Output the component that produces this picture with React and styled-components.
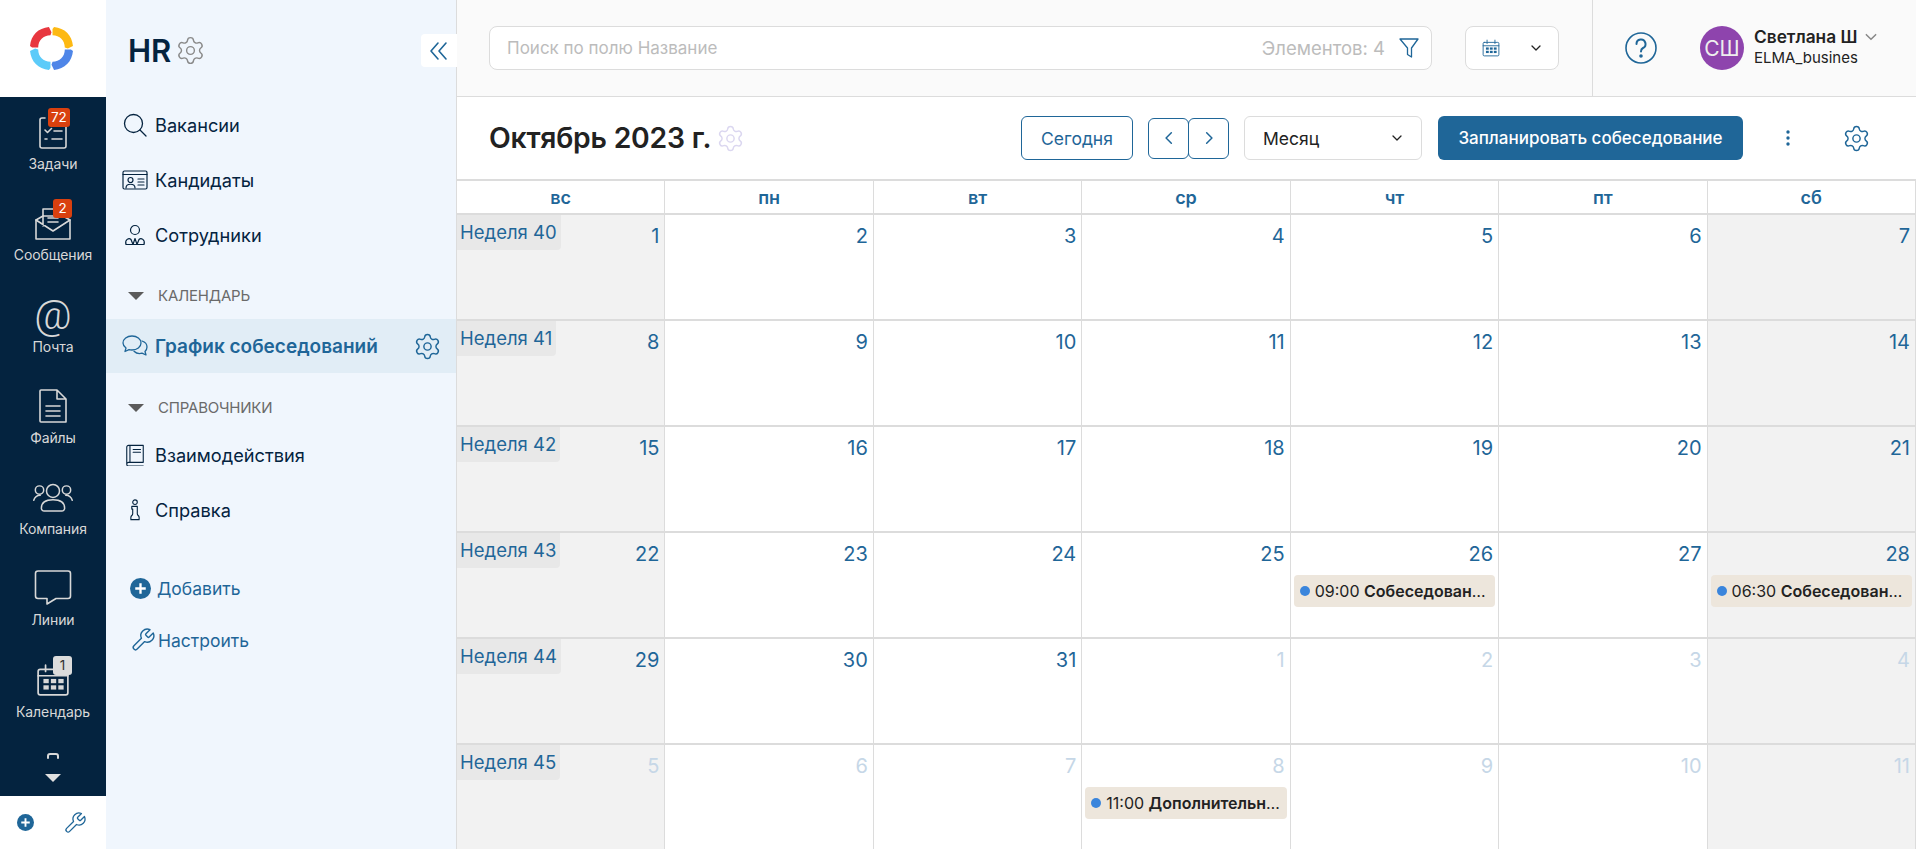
import React from 'react';
import styled, { createGlobalStyle } from 'styled-components';
import { Settings } from 'lucide-react';

const blue = '#1f6698';
const navy = '#04233f';

const GlobalStyle = createGlobalStyle`
  html, body {
    margin: 0;
    height: 100%;
    overflow: hidden;
    background: #fff;
    font-family: Inter, "Noto Sans", sans-serif;
  }
  * { box-sizing: border-box; }
`;

const Page = styled.div`
  display: flex;
  width: 1916px;
  height: 849px;
  overflow: hidden;
`;

const Rail = styled.aside`
  width: 106px;
  flex: none;
  display: flex;
  flex-direction: column;
`;

const LogoBox = styled.div`
  height: 97px;
  display: flex;
  align-items: center;
  justify-content: center;
  padding-right: 4px;
  background: #fff;
`;

const RailNav = styled.nav`
  flex: 1;
  background: ${navy};
  padding-top: 3px;
  display: flex;
  flex-direction: column;
`;

const RailItem = styled.div`
  height: 91.3px;
  display: flex;
  flex-direction: column;
  align-items: center;
  justify-content: flex-start;
  padding-top: 12px;
  gap: 3px;
  color: #d8d8d8;
  font-size: 14px;
  letter-spacing: -0.1px;
`;

const RailIcon = styled.div`
  position: relative;
  width: 40px;
  height: 40px;
  display: flex;
  align-items: center;
  justify-content: center;
`;

const AtGlyph = styled.span`
  color: #d8d8d8;
  font-family: Roboto, sans-serif;
  font-size: 41px;
  font-weight: 300;
  line-height: 36px;
`;

const Count = styled.span`
  position: absolute;
  top: ${p => p.$top}px;
  left: ${p => p.$left}px;
  min-width: 19px;
  height: 19px;
  padding: 0 3px;
  border-radius: 3px;
  background: ${p => (p.$muted ? '#dcdcdc' : '#d9400f')};
  color: ${p => (p.$muted ? '#333' : '#fff')};
  font-size: 13.500px;
  line-height: 19px;
  text-align: center;
`;

const MoreBox = styled.div`
  display: flex;
  flex-direction: column;
  align-items: center;
  gap: 5px;
  padding-top: 10px;
`;

const RailFoot = styled.div`
  height: 53px;
  display: flex;
  align-items: center;
  justify-content: center;
  gap: 29px;
  padding-right: 2px;
  background: #fff;
`;

const Side = styled.aside`
  position: relative;
  width: 351px;
  flex: none;
  background: #f0f6fd;
  border-right: 1px solid #dcdcdc;
`;

const SideHead = styled.div`
  height: 97px;
  display: flex;
  align-items: center;
  gap: 4px;
  padding: 4px 0 0 22px;
  color: ${navy};
  font-size: 31px;
  font-weight: 600;
`;

const Collapse = styled.div`
  position: absolute;
  top: 34px;
  right: -1px;
  width: 36px;
  height: 33px;
  background: #fff;
  border-radius: 4px 0 0 4px;
  display: flex;
  align-items: center;
  justify-content: center;
`;

const MenuList = styled.div`
  display: flex;
  flex-direction: column;
`;

const MenuItem = styled.div`
  height: ${p => (p.$active ? 54 : 55)}px;
  display: flex;
  align-items: center;
  gap: 7px;
  padding: 0 14px 0 15px;
  background: ${p => (p.$active ? '#e1edf6' : 'transparent')};
  color: ${p => (p.$active ? blue : navy)};
  font-size: ${p => (p.$active ? 19 : 18.2)}px;
  font-weight: ${p => (p.$active ? 600 : 400)};
`;

const MenuIcon = styled.span`
  width: 27px;
  flex: none;
  display: flex;
  align-items: center;
  justify-content: center;
`;

const MenuLabel = styled.span`
  flex: 1;
`;

const Section = styled.div`
  height: ${p => p.$h}px;
  padding-top: ${p => p.$pt}px;
  display: flex;
  align-items: flex-start;
  gap: 14px;
  padding-left: 22px;
  color: #6a6a6a;
  font-size: 15px;
  letter-spacing: -0.2px;
`;

const Caret = styled.span`
  margin-top: 6px;
  width: 0;
  height: 0;
  border-left: 8px solid transparent;
  border-right: 8px solid transparent;
  border-top: 8px solid ${p => p.$color || '#5b5b5b'};
`;

const SideActions = styled.div`
  padding: 40px 0 0 24px;
  display: flex;
  flex-direction: column;
  gap: 30px;
`;

const SideAction = styled.div`
  display: flex;
  align-items: center;
  gap: ${p => p.$gap}px;
  height: 22px;
  color: ${blue};
  font-size: 17.500px;
`;

const Main = styled.main`
  flex: 1;
  min-width: 0;
  display: flex;
  flex-direction: column;
`;

const TopBar = styled.header`
  height: 97px;
  flex: none;
  display: flex;
  align-items: stretch;
  background: #fafafa;
  border-bottom: 1px solid #dcdcdc;
`;

const TopLeft = styled.div`
  flex: none;
  width: 1136px;
  padding: 0 33px 0 32px;
  display: flex;
  align-items: center;
  gap: 33px;
  border-right: 1px solid #dcdcdc;
`;

const Search = styled.div`
  flex: 1;
  height: 44px;
  margin-top: -1px;
  padding: 0 11px 0 17px;
  display: flex;
  align-items: center;
  justify-content: space-between;
  background: #fff;
  border: 1px solid #dcdcdc;
  border-radius: 8px;
  color: #bcbcbc;
  font-size: 17px;
`;

const SearchRight = styled.div`
  display: flex;
  align-items: center;
  gap: 13px;
  font-size: 18.500px;
`;

const DateButton = styled.div`
  width: 94px;
  height: 44px;
  margin-top: -1px;
  padding: 0 16px;
  display: flex;
  align-items: center;
  justify-content: space-between;
  background: #fff;
  border: 1px solid #dcdcdc;
  border-radius: 8px;
`;

const TopRight = styled.div`
  flex: 1;
  display: flex;
  align-items: center;
  padding-left: 32px;
`;

const Avatar = styled.div`
  width: 44px;
  height: 44px;
  margin-left: 43px;
  border-radius: 50%;
  background: #8e44ad;
  color: #eee;
  font-size: 21px;
  display: flex;
  align-items: center;
  justify-content: center;
`;

const UserBox = styled.div`
  margin-left: 10px;
  color: #222;
`;

const UserName = styled.div`
  display: flex;
  align-items: center;
  gap: 7px;
  font-size: 17.300px;
  font-weight: 600;
  line-height: 20px;
`;

const UserOrg = styled.div`
  font-size: 15px;
  line-height: 22px;
`;

const Toolbar = styled.div`
  height: 82px;
  flex: none;
  display: flex;
  align-items: center;
  padding: 0 45px 0 32px;
`;

const Title = styled.h1`
  margin: 0 5px 0 0;
  color: #222;
  font-size: 28.300px;
  font-weight: 600;
  letter-spacing: -0.2px;
`;

const Spacer = styled.div`
  flex: 1;
`;

const OutlineButton = styled.div`
  width: 112px;
  height: 44px;
  margin-right: 15px;
  display: flex;
  align-items: center;
  justify-content: center;
  border: 1px solid ${blue};
  border-radius: 6px;
  color: ${blue};
  font-size: 17.500px;
`;

const ArrowButton = styled.div`
  width: 41px;
  height: 41px;
  margin-left: ${p => (p.$joined ? -1 : 0)}px;
  display: flex;
  align-items: center;
  justify-content: center;
  border: 1px solid ${blue};
  border-radius: 6px;
`;

const Select = styled.div`
  width: 178px;
  height: 44px;
  margin: 0 16px 0 15px;
  padding: 0 18px;
  display: flex;
  align-items: center;
  justify-content: space-between;
  border: 1px solid #dcdcdc;
  border-radius: 6px;
  color: #222;
  font-size: 17.500px;
`;

const PrimaryButton = styled.div`
  width: 305px;
  height: 44px;
  display: flex;
  align-items: center;
  justify-content: center;
  background: ${blue};
  border-radius: 6px;
  color: #fff;
  font-size: 17px;
  font-weight: 500;
`;

const ToolIcons = styled.div`
  display: flex;
  align-items: center;
  gap: 52px;
  margin-left: 43px;
`;

const Grid = styled.div`
  flex: 1;
  min-height: 0;
  display: grid;
  grid-template-columns: repeat(7, 1fr);
  grid-template-rows: 34px repeat(6, 106px);
  border-top: 2px solid #dcdcdc;
`;

const DayHead = styled.div`
  display: flex;
  align-items: center;
  justify-content: center;
  border-right: 1px solid #dcdcdc;
  border-bottom: 2px solid #dcdcdc;
  color: ${blue};
  font-size: 18px;
  font-weight: 600;
`;

const Cell = styled.div`
  position: relative;
  min-width: 0;
  padding: 10px 3px 0;
  border-right: 1px solid #dcdcdc;
  border-bottom: 2px solid #dcdcdc;
  background: ${p => (p.$weekend ? '#f2f2f2' : '#fff')};
`;

const DayNumber = styled.div`
  padding-right: 2px;
  text-align: right;
  color: ${p => (p.$muted ? '#c6d7e7' : blue)};
  font-size: 20px;
  line-height: 22px;
`;

const WeekBadge = styled.div`
  position: absolute;
  top: 0;
  left: 0;
  height: 35px;
  padding: 5px 4px 0 3px;
  background: #e8e8e8;
  border-radius: 0 0 4px 0;
  color: ${blue};
  font-size: 18.500px;
  line-height: 24px;
`;

const EventChip = styled.div`
  height: 32px;
  margin-top: 10px;
  padding: 0 6px;
  display: flex;
  align-items: center;
  gap: 5px;
  background: #ede6dc;
  border-radius: 4px;
  color: #222;
  font-size: 16px;
`;

const EventDot = styled.span`
  width: 10px;
  height: 10px;
  flex: none;
  border-radius: 50%;
  background: #3a85dc;
`;

const EventText = styled.span`
  min-width: 0;
  overflow: hidden;
  white-space: nowrap;
  text-overflow: ellipsis;

  b {
    font-weight: 600;
  }
`;

// one ring segment, rotated for each of the four colours
const logoSegment = 'M1 19.500 C2 9 9 2 19.500 1 L22 6 L21 9 C14 9 9 14 9 21 L3 21 z';

const Logo = () => (
  <svg width="45" height="45" viewBox="0 0 44 44">
    <path d={logoSegment} fill="#e8373f" />
    <path d={logoSegment} fill="#fdb913" transform="rotate(90 22 22)" />
    <path d={logoSegment} fill="#4f86e8" transform="rotate(180 22 22)" />
    <path d={logoSegment} fill="#5ccbf9" transform="rotate(270 22 22)" />
  </svg>
);

const Line = ({ size = 24, color = '#d8d8d8', width = 1.6, children, viewBox }) => (
  <svg
    width={size}
    height={size}
    viewBox={viewBox || `0 0 ${size} ${size}`}
    fill="none"
    stroke={color}
    strokeWidth={width}
    strokeLinecap="round"
    strokeLinejoin="round"
  >
    {children}
  </svg>
);

const Gear = ({ size = 24, color = blue, width = 1.3 }) => (
  <Settings size={size} color={color} strokeWidth={width} />
);

const Wrench = ({ size = 24 }) => (
  <Line size={size} color={blue} width={1.3} viewBox="0 0 24 24">
    <path d="M14.700 6.300 a1 1 0 0 0 0 1.400 l1.600 1.600 a1 1 0 0 0 1.400 0 l3.770-3.770 a6 6 0 0 1-7.940 7.940 l-6.910 6.910 a2.120 2.120 0 0 1-3-3 l6.910-6.910 a6 6 0 0 1 7.940-7.940 l-3.760 3.760 z" />
  </Line>
);

const PlusCircle = ({ size = 18 }) => (
  <svg width={size} height={size} viewBox="0 0 18 18">
    <circle cx="9" cy="9" r="9" fill={blue} />
    <path d="M9 4.500 v9 M4.500 9 h9" stroke="#fff" strokeWidth="2" />
  </svg>
);

const Chevron = ({ dir = 'down', color = '#222', size = 12 }) => {
  const d = {
    down: 'M2 4 L6 8 L10 4',
    left: 'M8 1.500 L3.500 6 L8 10.500',
    right: 'M4 1.500 L8.500 6 L4 10.500',
  }[dir];
  return (
    <Line size={size} color={color} width={1.3} viewBox="0 0 12 12">
      <path d={d} />
    </Line>
  );
};

const CalendarGlyph = ({ size, color, width }) => (
  <Line size={size} color={color} width={width} viewBox="0 0 32 32">
    <rect x="2" y="6" width="28" height="24" rx="2" />
    <path d="M2 12 H30 M9 2 V8 M23 2 V8" />
    <g fill={color} stroke="none">
      <rect x="7" y="15" width="5" height="4" />
      <rect x="14" y="15" width="5" height="4" />
      <rect x="21" y="15" width="5" height="4" />
      <rect x="7" y="21" width="5" height="4" />
      <rect x="14" y="21" width="5" height="4" />
      <rect x="21" y="21" width="5" height="4" />
    </g>
  </Line>
);

const railItems = [
  {
    label: 'Задачи',
    count: '72',
    top: -4,
    left: 15,
    icon: (
      <Line size={34} viewBox="0 0 34 34">
        <path d="M9 3 H6 a2 2 0 0 0-2 2 V31 a2 2 0 0 0 2 2 H28 a2 2 0 0 0 2-2 V5 a2 2 0 0 0-2-2 H25" />
        <path d="M9 15 l2.500 2.500 4-4 M18 16 H26 M9 24 H11 M16 24 H26" />
      </Line>
    ),
  },
  {
    label: 'Сообщения',
    count: '2',
    top: -4,
    left: 20,
    icon: (
      <Line size={38} viewBox="0 0 38 38">
        <path d="M9 12 L2 16 V35 H36 V16 L29 12" />
        <path d="M2 16 L19 27 L36 16 M9 22 V5 H24 M9 12 H29 M14 14 H24 M14 18 H24" />
      </Line>
    ),
  },
  {
    label: 'Почта',
    icon: <AtGlyph>@</AtGlyph>,
  },
  {
    label: 'Файлы',
    icon: (
      <Line size={36} viewBox="0 0 36 36">
        <path d="M6 2 H22 L31 11 V34 H6 a1 1 0 0 1-1-1 V3 a1 1 0 0 1 1-1 z M22 2 V11 H31" />
        <path d="M11 18 H25 M11 23 H25 M11 28 H25" />
      </Line>
    ),
  },
  {
    label: 'Компания',
    icon: (
      <Line size={43} viewBox="0 0 43 30">
        <circle cx="21.500" cy="8" r="7" />
        <circle cx="7" cy="7" r="4.500" />
        <circle cx="36" cy="7" r="4.500" />
        <path d="M12 29.500 a3 3 0 0 1-3-3 c0-6 5-9 12.500-9 s12.500 3 12.500 9 a3 3 0 0 1-3 3 z M.8 18 c1-3.500 4-5.500 7-5.500 M42.200 18 c-1-3.500-4-5.500-7-5.500" />
      </Line>
    ),
  },
  {
    label: 'Линии',
    icon: (
      <Line size={38} viewBox="0 0 38 38">
        <path d="M4 2 H34 a2.500 2.500 0 0 1 2.500 2.500 V27 a2.500 2.500 0 0 1-2.500 2.500 H22 L13 35 V29.500 H4 A2.500 2.500 0 0 1 1.500 27 V4.500 A2.500 2.500 0 0 1 4 2 z" />
      </Line>
    ),
  },
  {
    label: 'Календарь',
    count: '1',
    top: -4,
    left: 20,
    muted: true,
    icon: <CalendarGlyph size={34} color="#d8d8d8" width={1.6} />,
  },
];

const menuIcons = {
  search: (
    <Line size={24} color={navy} width={1.3} viewBox="0 0 24 24">
      <circle cx="10.500" cy="10.500" r="9" />
      <path d="M17 17 L23 23" />
    </Line>
  ),
  card: (
    <Line size={26} color={navy} width={1.2} viewBox="0 0 26 20">
      <rect x="1" y="1" width="24" height="18" rx="1.500" />
      <path d="M1 4.500 H25" />
      <circle cx="8.500" cy="10" r="2.500" />
      <path d="M4 18 c0-5 9-5 9 0 M16 9 H22 M16 12 H22 M16 15 H22" />
    </Line>
  ),
  people: (
    <Line size={22} color={navy} width={1.2} viewBox="0 0 22 22">
      <circle cx="11" cy="6" r="4.500" />
      <path d="M2 20.500 c-1.500-5 3-7 5-5 l2 5 z M13 20.500 l2-5 c2-2 6.500 0 5 5 z M9 20.500 h4 l-2-6 z" />
    </Line>
  ),
  chat: (
    <Line size={26} color={blue} width={1.3} viewBox="0 0 26 24">
      <path d="M10 2 c5 0 9 3 9 7 s-4 7-9 7 c-1 0-2 0-3-.3 L3 17.500 l1-3.500 C2 12.500 1 11 1 9 c0-4 4-7 9-7 z" />
      <path d="M20 7 c3 1 5 3.500 5 6 0 2-1 3.500-2 4.500 l1 3.500-4-1.800 c-3 .8-6 0-8-2" />
    </Line>
  ),
  book: (
    <Line size={22} color={navy} width={1.2} viewBox="0 0 22 24">
      <path d="M4 1.500 H20 V20 H4 a2 2 0 0 0 0 4 H20 M2 22 V3.500 a2 2 0 0 1 2-2 M5.500 1.500 V20" />
      <path d="M9 6 H17 M9 9 H17" />
    </Line>
  ),
  help: (
    <Line size={22} color={navy} width={1.2} viewBox="0 0 22 24">
      <circle cx="11" cy="3.500" r="2.500" />
      <path d="M7.500 8 H13.500 V16 c0 2 2 2 2 4 V22.500 H6.500 V20 c0-2 2-2 2-4 V11 H7.500 z" />
    </Line>
  ),
};

const firstMenu = [
  { label: 'Вакансии', icon: 'search' },
  { label: 'Кандидаты', icon: 'card' },
  { label: 'Сотрудники', icon: 'people' },
];

const lastMenu = [
  { label: 'Взаимодействия', icon: 'book' },
  { label: 'Справка', icon: 'help' },
];

const weekDays = ['вс', 'пн', 'вт', 'ср', 'чт', 'пт', 'сб'];

const eventsByDay = {
  '26': { time: '09:00', title: 'Собеседование' },
  '28': { time: '06:30', title: 'Собеседование' },
  '8m': { time: '11:00', title: 'Дополнительное собеседование' },
};

// 1 Oct 2023 is a Sunday; 42 days from there fill the month view
const days = Array.from({ length: 42 }, (_, i) => {
  const date = new Date(2023, 9, 1 + i);
  const muted = date.getMonth() !== 9;
  return { n: date.getDate(), muted, key: `${date.getDate()}${muted ? 'm' : ''}` };
});

const App = () => (
  <Page>
    <GlobalStyle />
    <Rail>
      <LogoBox>
        <Logo />
      </LogoBox>
      <RailNav>
        {railItems.map(item => (
          <RailItem key={item.label}>
            <RailIcon>
              {item.icon}
              {item.count && (
                <Count $top={item.top} $left={item.left} $muted={item.muted}>
                  {item.count}
                </Count>
              )}
            </RailIcon>
            {item.label}
          </RailItem>
        ))}
        <MoreBox>
          <Line size={14} viewBox="0 0 14 8" width={2}>
            <path d="M2 6 V4 a2 2 0 0 1 2-2 H10 a2 2 0 0 1 2 2 V6" />
          </Line>
          <Caret $color="#e0e0e0" />
        </MoreBox>
      </RailNav>
      <RailFoot>
        <PlusCircle size={17} />
        <Wrench size={24} />
      </RailFoot>
    </Rail>

    <Side>
      <SideHead>
        HR
        <Gear size={31} color="#8a8a8a" width={1.1} />
      </SideHead>
      <Collapse>
        <Line size={20} color={blue} width={1.6} viewBox="0 0 20 20">
          <path d="M9 2 L2 10 L9 18 M17 2 L10 10 L17 18" />
        </Line>
      </Collapse>
      <MenuList>
        {firstMenu.map(item => (
          <MenuItem key={item.label}>
            <MenuIcon>{menuIcons[item.icon]}</MenuIcon>
            <MenuLabel>{item.label}</MenuLabel>
          </MenuItem>
        ))}
        <Section $h={57} $pt={24}>
          <Caret />
          КАЛЕНДАРЬ
        </Section>
        <MenuItem $active>
          <MenuIcon>{menuIcons.chat}</MenuIcon>
          <MenuLabel>График собеседований</MenuLabel>
          <Gear size={29} color={blue} width={1.2} />
        </MenuItem>
        <Section $h={54} $pt={25}>
          <Caret />
          СПРАВОЧНИКИ
        </Section>
        {lastMenu.map(item => (
          <MenuItem key={item.label}>
            <MenuIcon>{menuIcons[item.icon]}</MenuIcon>
            <MenuLabel>{item.label}</MenuLabel>
          </MenuItem>
        ))}
      </MenuList>
      <SideActions>
        <SideAction $gap={6}>
          <PlusCircle size={21} />
          <span>Добавить</span>
        </SideAction>
        <SideAction $gap={2}>
          <Wrench size={26} />
          <span>Настроить</span>
        </SideAction>
      </SideActions>
    </Side>

    <Main>
      <TopBar>
        <TopLeft>
          <Search>
            Поиск по полю Название
            <SearchRight>
              Элементов: 4
              <Line size={22} color={blue} width={1.3} viewBox="0 0 22 22">
                <path d="M2 2 H20 L13.500 11 V20 L9.500 17.500 V11 z" />
              </Line>
            </SearchRight>
          </Search>
          <DateButton>
            <CalendarGlyph size={18} color={blue} width={1.6} />
            <Chevron />
          </DateButton>
        </TopLeft>
        <TopRight>
          <Line size={32} color={blue} width={1.6} viewBox="0 0 32 32">
            <circle cx="16" cy="16" r="15" />
            <path d="M11.500 12 a4.500 4.500 0 1 1 6.500 4 c-1.500 .8-2 1.500-2 3.500" strokeWidth="2" />
            <circle cx="16" cy="24" r="1" fill={blue} />
          </Line>
          <Avatar>СШ</Avatar>
          <UserBox>
            <UserName>
              Светлана Ш
              <Chevron color="#888" size={14} />
            </UserName>
            <UserOrg>ELMA_busines</UserOrg>
          </UserBox>
        </TopRight>
      </TopBar>

      <Toolbar>
        <Title>Октябрь 2023 г.</Title>
        <Gear size={29} color="#dbd7f0" width={1.2} />
        <Spacer />
        <OutlineButton>Сегодня</OutlineButton>
        <ArrowButton>
          <Chevron dir="left" color={blue} size={14} />
        </ArrowButton>
        <ArrowButton $joined>
          <Chevron dir="right" color={blue} size={14} />
        </ArrowButton>
        <Select>
          Месяц
          <Chevron />
        </Select>
        <PrimaryButton>Запланировать собеседование</PrimaryButton>
        <ToolIcons>
          <svg width="4" height="16" viewBox="0 0 4 16" fill={blue}>
            <circle cx="2" cy="2" r="1.700" />
            <circle cx="2" cy="8" r="1.700" />
            <circle cx="2" cy="14" r="1.700" />
          </svg>
          <Gear size={29} width={1.2} />
        </ToolIcons>
      </Toolbar>

      <Grid>
        {weekDays.map(d => (
          <DayHead key={d}>{d}</DayHead>
        ))}
        {days.map((day, i) => {
          const event = eventsByDay[day.key];
          return (
            <Cell key={day.key} $weekend={i % 7 === 0 || i % 7 === 6}>
              {i % 7 === 0 && <WeekBadge>Неделя {40 + i / 7}</WeekBadge>}
              <DayNumber $muted={day.muted}>{day.n}</DayNumber>
              {event && (
                <EventChip>
                  <EventDot />
                  <EventText>
                    {event.time} <b>{event.title}</b>
                  </EventText>
                </EventChip>
              )}
            </Cell>
          );
        })}
      </Grid>
    </Main>
  </Page>
);

export default App;
